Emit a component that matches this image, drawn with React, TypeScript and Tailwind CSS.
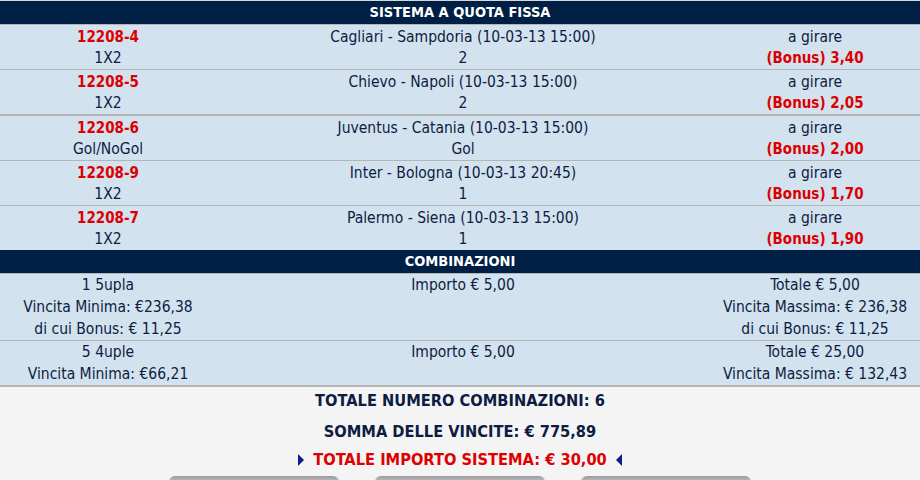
import React from "react";

const font = { fontFamily: '"DejaVu Sans Condensed", "DejaVu Sans", sans-serif' };

type Ev = { code: string; type: string; match: string; pick: string; bonus: string; thick?: boolean };

const events: Ev[] = [
  { code: "12208-4", type: "1X2", match: "Cagliari - Sampdoria (10-03-13 15:00)", pick: "2", bonus: "(Bonus) 3,40" },
  { code: "12208-5", type: "1X2", match: "Chievo - Napoli (10-03-13 15:00)", pick: "2", bonus: "(Bonus) 2,05", thick: true },
  { code: "12208-6", type: "Gol/NoGol", match: "Juventus - Catania (10-03-13 15:00)", pick: "Gol", bonus: "(Bonus) 2,00" },
  { code: "12208-9", type: "1X2", match: "Inter - Bologna (10-03-13 20:45)", pick: "1", bonus: "(Bonus) 1,70" },
  { code: "12208-7", type: "1X2", match: "Palermo - Siena (10-03-13 15:00)", pick: "1", bonus: "(Bonus) 1,90", thick: true },
];

function Header({ title }: { title: string }) {
  return (
    <div className="h-[24px] bg-[#001f45] border-b border-[#b5b5b5] flex items-center justify-center text-white font-bold text-[14.5px] leading-none">
      {title}
    </div>
  );
}

export default function App() {
  return (
    <div className="w-[920px] h-[480px] overflow-hidden bg-[#f4f4f4] text-[#0d1c42] text-[15.5px]" style={font}>
      <div className="h-[1px] bg-[#d8d8d8]" />
      <Header title="SISTEMA A QUOTA FISSA" />
      {events.map((e, i) => (
        <div
          key={e.code}
          className={
            "grid grid-cols-[216px_1fr_210px] bg-[#d3e2ef] text-center leading-[21px] pt-[2px] " +
            (i === events.length - 1 ? "" : e.thick ? "border-b-2 border-[#b5b5b5]" : "border-b border-[#b5b5b5]")
          }
        >
          <div>
            <div className="text-[#dd0000] font-bold text-[15px]">{e.code}</div>
            <div>{e.type}</div>
          </div>
          <div>
            <div>{e.match}</div>
            <div>{e.pick}</div>
          </div>
          <div>
            <div>a girare</div>
            <div className="text-[#dd0000] font-bold text-[15px]">{e.bonus}</div>
          </div>
        </div>
      ))}
      <Header title="COMBINAZIONI" />
      <div className="grid grid-cols-[216px_1fr_210px] bg-[#d3e2ef] text-center leading-[22px] border-b border-[#b5b5b5]">
        <div>
          <div>1 5upla</div>
          <div>Vincita Minima: €236,38</div>
          <div>di cui Bonus: € 11,25</div>
        </div>
        <div>Importo € 5,00</div>
        <div>
          <div>Totale € 5,00</div>
          <div>Vincita Massima: € 236,38</div>
          <div>di cui Bonus: € 11,25</div>
        </div>
      </div>
      <div className="grid grid-cols-[216px_1fr_210px] bg-[#d3e2ef] text-center leading-[22px] border-b-2 border-[#b5b5b5]">
        <div>
          <div>5 4uple</div>
          <div>Vincita Minima: €66,21</div>
        </div>
        <div>Importo € 5,00</div>
        <div>
          <div>Totale € 25,00</div>
          <div>Vincita Massima: € 132,43</div>
        </div>
      </div>
      <div className="flex flex-col items-center text-[16.3px] font-bold text-[#0d1c42]">
        <div className="h-[29px] flex items-center">TOTALE NUMERO COMBINAZIONI: 6</div>
        <div className="h-[32px] flex items-center">SOMMA DELLE VINCITE: € 775,89</div>
        <div className="h-[24px] flex items-center gap-[9px]">
          <svg width="6" height="12" viewBox="0 0 6 12"><polygon points="0,0 6,6 0,12" fill="#0a1f8a" /></svg>
          <span className="text-[#dd0000]">TOTALE IMPORTO SISTEMA: € 30,00</span>
          <svg width="6" height="12" viewBox="0 0 6 12"><polygon points="6,0 0,6 6,12" fill="#0a1f8a" /></svg>
        </div>
      </div>
      <div className="flex justify-center gap-[36px] pt-[4px]">
        <div className="w-[170px] h-[10px] rounded-t-[6px] bg-gradient-to-b from-[#9a9a9a] to-[#e0e0e0]" />
        <div className="w-[170px] h-[10px] rounded-t-[6px] bg-gradient-to-b from-[#9a9a9a] to-[#e0e0e0]" />
        <div className="w-[170px] h-[10px] rounded-t-[6px] bg-gradient-to-b from-[#9a9a9a] to-[#e0e0e0]" />
      </div>
    </div>
  );
}
